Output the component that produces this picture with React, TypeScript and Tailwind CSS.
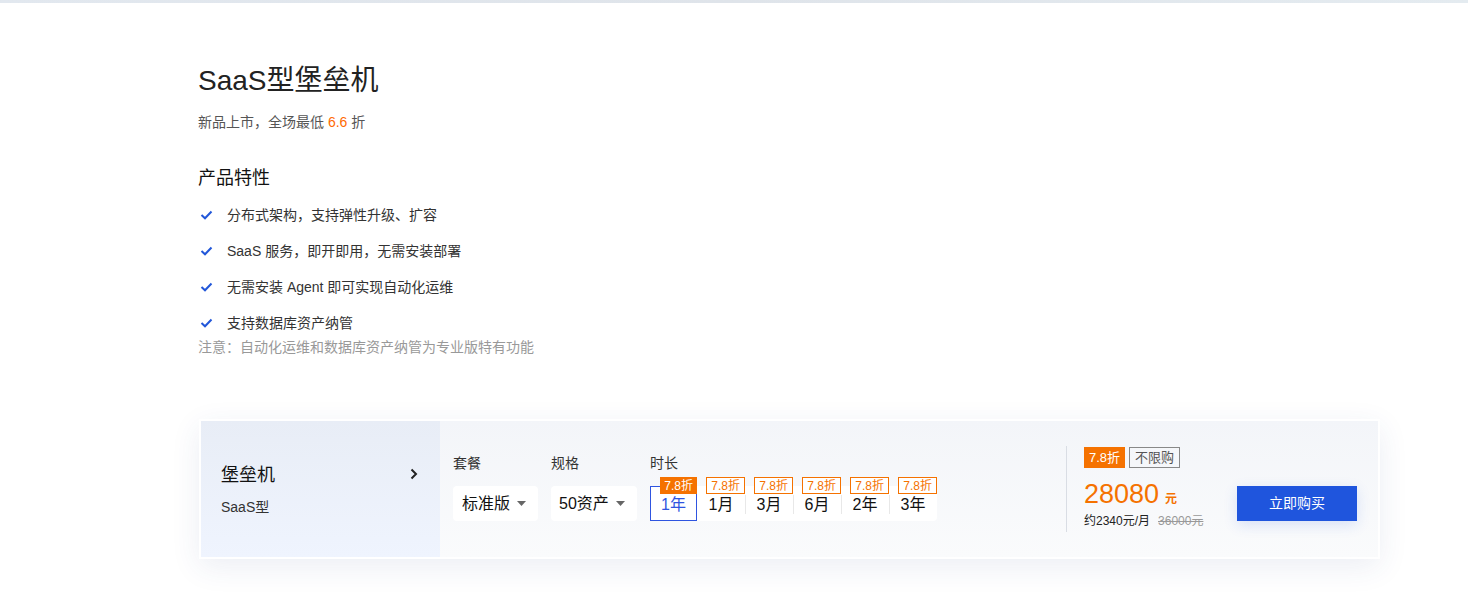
import React from 'react';

const font = { fontFamily: '"Liberation Sans", "Noto Sans CJK SC", sans-serif' };

function Check() {
  return (
    <svg width="13" height="10" viewBox="0 0 13 10" className="shrink-0">
      <polyline points="1.5,5 5,8.3 11.5,1.5" fill="none" stroke="#2257d9" strokeWidth="2" />
    </svg>
  );
}

function Caret() {
  return (
    <svg width="9" height="5" viewBox="0 0 9 5">
      <polygon points="0,0 9,0 4.5,5" fill="#666" />
    </svg>
  );
}

export default function App() {
  const features = [
    '分布式架构，支持弹性升级、扩容',
    'SaaS 服务，即开即用，无需安装部署',
    '无需安装 Agent 即可实现自动化运维',
    '支持数据库资产纳管',
  ];
  const durations = ['1年', '1月', '3月', '6月', '2年', '3年'];

  return (
    <div className="min-h-screen bg-white text-[#222]" style={font}>
      {/* top strip from banner */}
      <div className="h-[3px] bg-gradient-to-r from-[#e2e8ef] via-[#dfe4ea] to-[#e4ebf0]" />

      <div className="ml-[198px] w-[1183px] pt-[60px]">
        <h1 className="text-[28px] leading-[36px] text-[#222]">SaaS型堡垒机</h1>
        <p className="mt-[13px] text-[14px] leading-5 text-[#555]">
          新品上市，全场最低 <span className="text-[#ff6a00]">6.6</span> 折
        </p>

        <h2 className="mt-[33px] text-[18px] leading-[26px] text-[#111]">产品特性</h2>
        <ul className="mt-[14px] flex flex-col gap-4">
          {features.map((f) => (
            <li key={f} className="flex h-5 items-center gap-[14px] pl-[2px] text-[14px] text-[#333]">
              <Check />
              <span>{f}</span>
            </li>
          ))}
        </ul>
        <p className="mt-[4px] text-[14px] leading-5 text-[#999]">注意：自动化运维和数据库资产纳管为专业版特有功能</p>

        {/* purchase card */}
        <div className="mt-[62px] ml-[1px] flex w-[1181px] border-2 border-white shadow-[0_8px_28px_rgba(40,70,130,0.09)]">
          <div className="flex h-[136px] w-[239px] items-center bg-gradient-to-b from-[#e8edf6] to-[#eff4fe] pl-[20px] pr-[22px]">
            <div className="flex-1">
              <div className="text-[18px] leading-[26px] text-[#111]">堡垒机</div>
              <div className="mt-[9px] text-[14px] leading-5 text-[#333]">SaaS型</div>
            </div>
            <svg width="8" height="12" viewBox="0 0 8 12" className="mb-[30px]">
              <polyline points="1.5,1.5 6,6 1.5,10.5" fill="none" stroke="#222" strokeWidth="2" />
            </svg>
          </div>

          <div className="flex flex-1 items-center bg-gradient-to-b from-[#f3f5f9] to-[#fafbfc]">
            <div className="flex flex-1 self-start gap-[13px] pl-[13px] pt-[32px]">
              <div>
                <div className="text-[14px] leading-5 text-[#333]">套餐</div>
                <div className="mt-[13px] flex h-[35px] w-[85px] items-center justify-between rounded-sm bg-white pl-[9px] pr-[12px] text-[16px] text-[#111]">
                  <span>标准版</span>
                  <Caret />
                </div>
              </div>
              <div>
                <div className="text-[14px] leading-5 text-[#333]">规格</div>
                <div className="mt-[13px] flex h-[35px] w-[86px] items-center justify-between rounded-sm bg-white pl-[8px] pr-[12px] text-[16px] text-[#111]">
                  <span>50资产</span>
                  <Caret />
                </div>
              </div>
              <div>
                <div className="text-[14px] leading-5 text-[#333]">时长</div>
                <div className="mt-[13px] flex h-[35px] rounded-sm bg-white">
                  {durations.map((d, i) => (
                    <div
                      key={d}
                      className={
                        i === 0
                          ? 'relative flex w-[47px] items-center justify-center border border-[#2f55e0] text-[16px] text-[#2f55e0]'
                          : 'relative flex w-[48px] items-center justify-center text-[16px] text-[#111]'
                      }
                    >
                      {i > 1 && <div className="absolute left-0 top-[9px] h-[19px] w-px bg-[#e8e8e8]" />}
                      <span className="mt-[2px]">{d}</span>
                      {i === 0 ? (
                        <span className="absolute right-[-1px] top-[-10px] flex h-[17px] items-center bg-[#f57200] px-[4px] text-[12px] text-white">
                          7.8折
                        </span>
                      ) : (
                        <span className="absolute right-0 top-[-9px] flex h-[17px] items-center border border-[#f57200] bg-white px-[4px] text-[12px] text-[#f57200]">
                          7.8折
                        </span>
                      )}
                    </div>
                  ))}
                </div>
              </div>
            </div>

            <div className="flex h-[86px] w-[312px] items-start border-l border-[#d9dde4] pl-[17px] pr-[21px]">
              <div className="flex-1 pt-px">
                <div className="flex gap-[4px]">
                  <span className="flex h-[21px] items-center bg-[#f57200] px-[5px] text-[13px] text-white">7.8折</span>
                  <span className="flex h-[21px] items-center border border-[#888] px-[5px] text-[13px] text-[#555]">不限购</span>
                </div>
                <div className="mt-[11px] flex items-baseline text-[#f57200]">
                  <span className="text-[27px] leading-[30px]">28080</span>
                  <span className="ml-[6px] text-[12px] font-bold">元</span>
                </div>
                <div className="mt-[4px] flex gap-[8px] text-[12px] leading-4">
                  <span className="text-[#222]">约2340元/月</span>
                  <span className="text-[#999] line-through">36000元</span>
                </div>
              </div>
              <button className="mt-[40px] flex h-[35px] w-[120px] items-center justify-center bg-[#1f55dd] text-[14px] text-white shadow-[0_4px_14px_rgba(31,85,221,0.15)]">
                立即购买
              </button>
            </div>
          </div>
        </div>
      </div>
    </div>
  );
}
